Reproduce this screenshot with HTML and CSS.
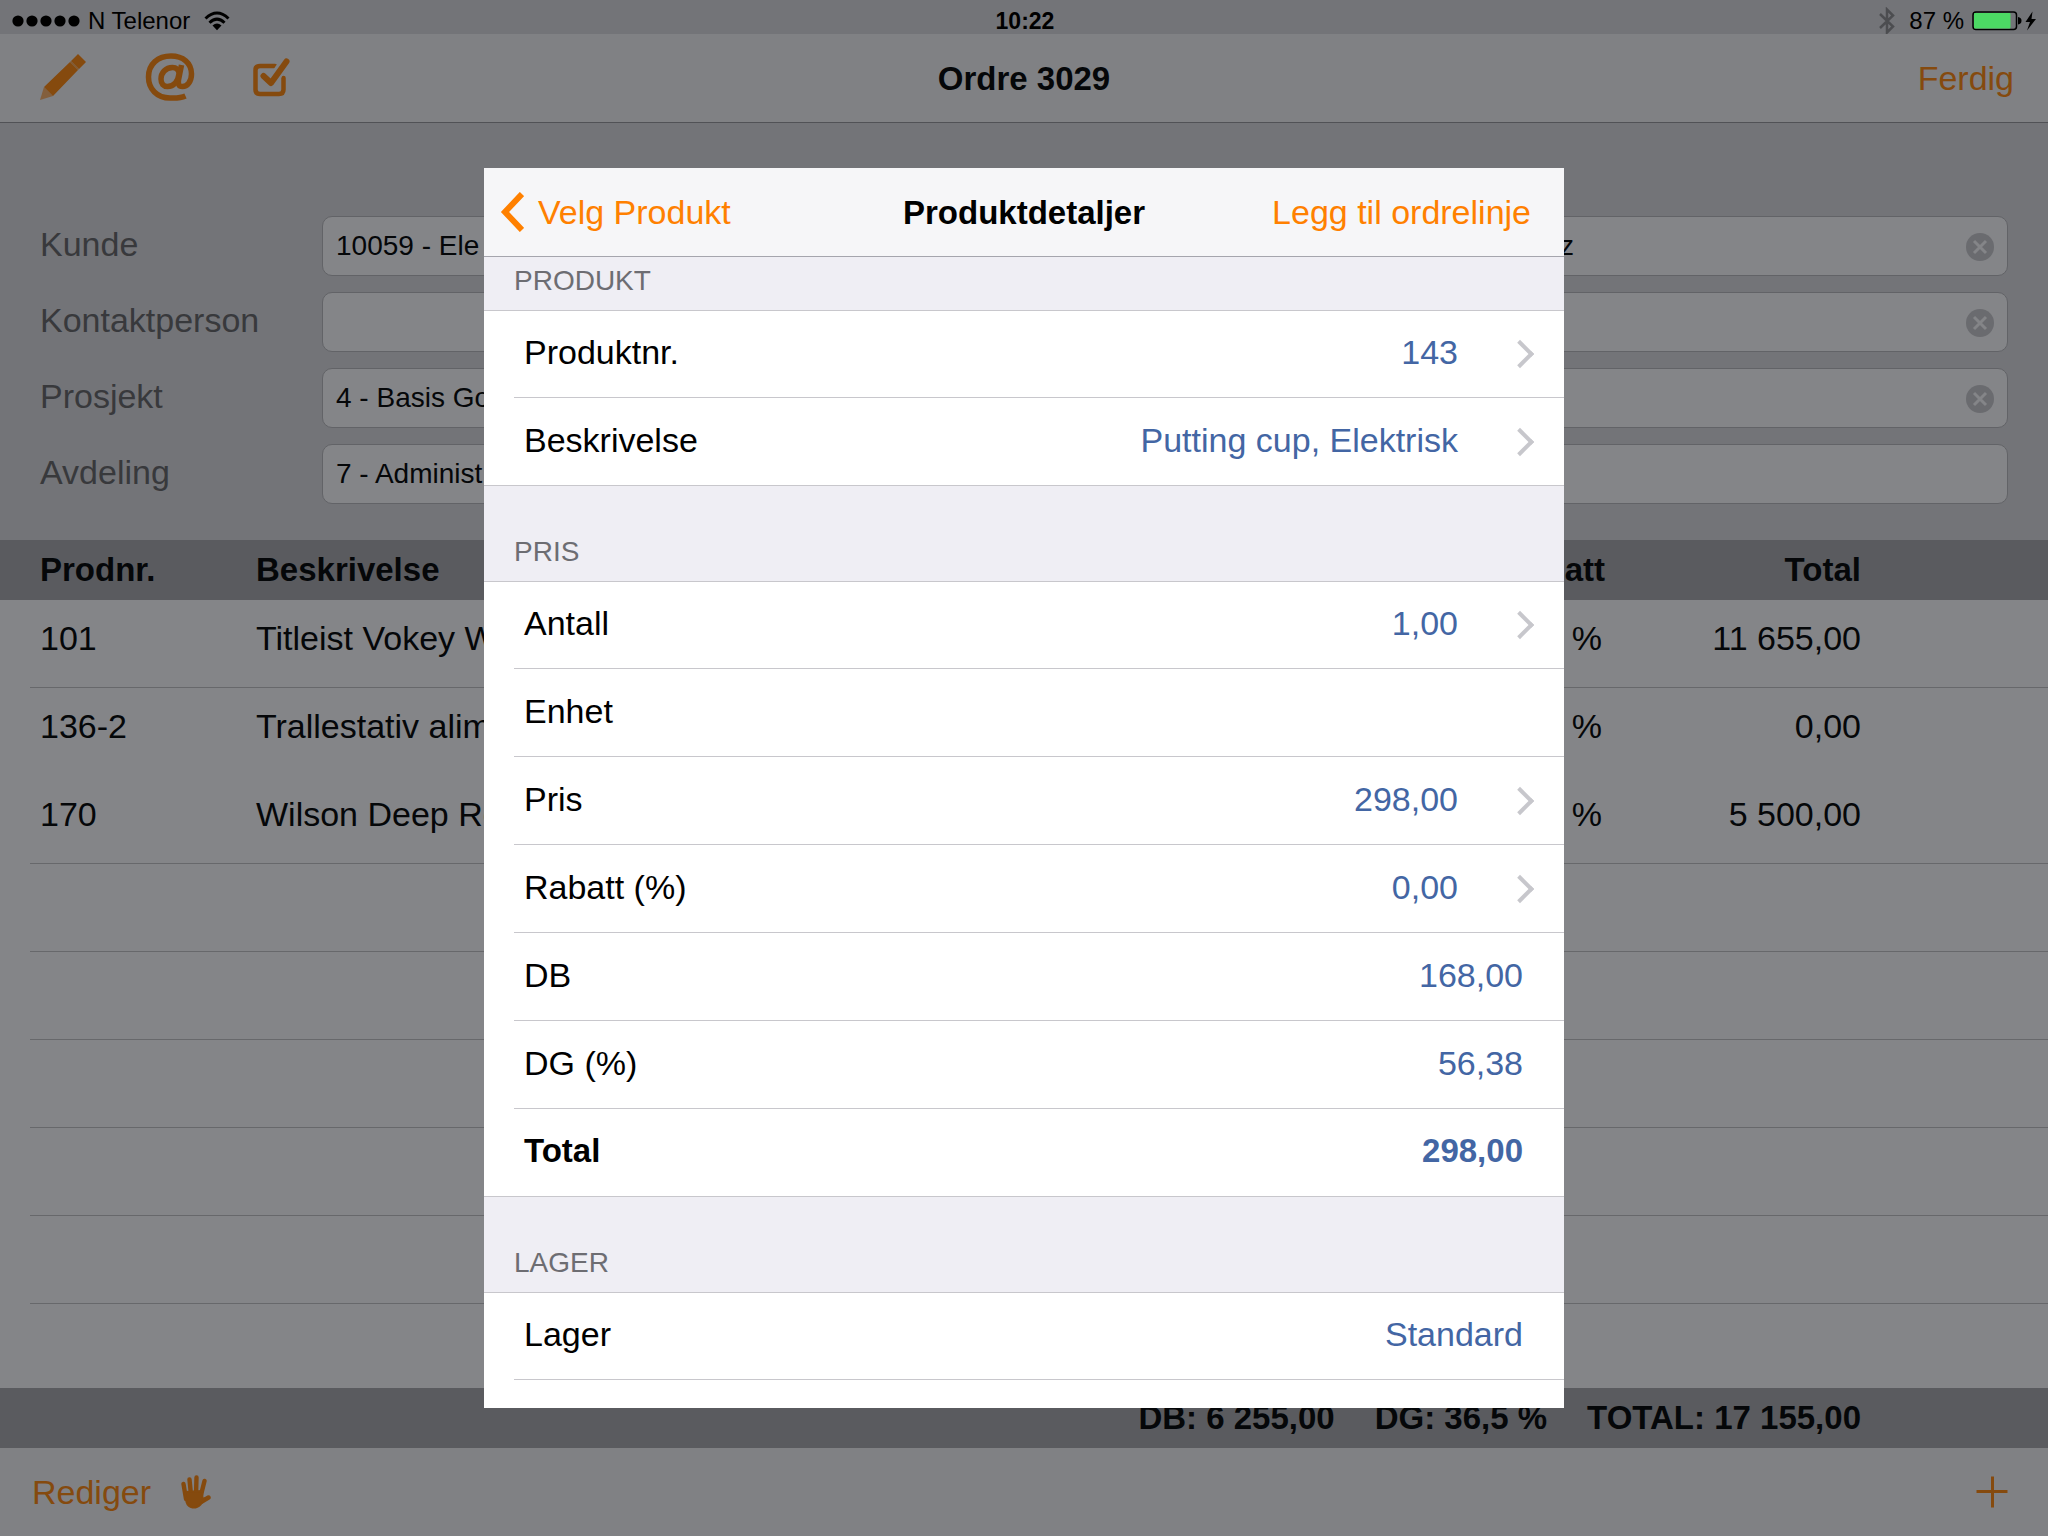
FILE: index.html
```html
<!DOCTYPE html>
<html lang="no">
<head>
<meta charset="utf-8">
<title>Ordre 3029</title>
<meta name="viewport" content="width=device-width, initial-scale=1">
<link rel="stylesheet" href="styles.css">
</head>
<body>
<div class="screen">
  <div class="status">
    <div class="status-side">
      <svg class="dots" width="68" height="12" viewBox="0 0 68 12"><circle cx="6" cy="6" r="5.6"/><circle cx="20" cy="6" r="5.6"/><circle cx="34" cy="6" r="5.6"/><circle cx="48" cy="6" r="5.6"/><circle cx="62" cy="6" r="5.6"/></svg>
      <span>N Telenor</span>
      <svg class="wifi" width="26" height="20" viewBox="0 0 26 20"><g fill="none" stroke="#000" stroke-width="3"><path d="M1.5 7.5Q13 -3.5 24.500 7.500"/><path d="M5.500 11.800Q13 4.500 20.500 11.800"/></g><path d="M8.500 14.500Q13 10.500 17.500 14.500L13 19.200z"/></svg>
    </div>
    <time class="clock">10:22</time>
    <div class="status-side status-right">
      <svg width="16" height="28" viewBox="0 0 16 28" fill="none" stroke="#4c4d50" stroke-width="2.500"><path d="M1 7L14 19.500L8 25.500V2.500L14 8.500L1 21"/></svg>
      <span>87 %</span>
      <svg width="66" height="20" viewBox="0 0 66 20"><rect x="1" y="1" width="43.500" height="17.500" rx="3" fill="none" stroke="#000" stroke-width="1.500"/><rect x="2" y="2" width="36.500" height="15.500" rx="1" fill="#4cd964"/><path d="M46 6Q49.500 6.500 49.500 9.800T46 13.500z"/><path d="M60.500 0.500L53.500 11H58L55 19.500L64 8H59.500z"/></svg>
    </div>
  </div>

  <header class="bar">
    <div class="tools">
      <button class="icon" aria-label="Rediger ordre"><svg width="48" height="48" viewBox="0 0 48 48" fill="currentColor"><path d="M39 0L47 8L40 15L32 7zM31 8L39 16L14 42L5 33z"/><path d="M31 8L32 7L40 15L39 16z" opacity=".7"/><path d="M5 33L14 42L1 46z" opacity=".6"/></svg></button>
      <button class="icon" aria-label="E-post"><svg width="50" height="50" viewBox="0 0 50 50" fill="none" stroke="currentColor" stroke-width="5.500"><path d="M40.500 43C35 45.500 30 45 25 45C12 45 3.500 36 3.500 24C3.500 11 13 3 26 3C38 3 46.500 10 46.500 21C46.500 29 42 33.500 37.500 33.500C33.500 33.500 33 31 33.500 27L36.500 12"/><path d="M34 21C34 16.500 31 14.500 27.500 14.500C20.500 14.500 16 20 16 26C16 31 18.500 33.500 22.500 33.500C29 33.500 33 28 34 21z"/></svg></button>
      <button class="icon" aria-label="Fullfør"><svg width="38" height="40" viewBox="0 0 38 40" fill="none" stroke="currentColor" stroke-linecap="round" stroke-linejoin="round"><path stroke-width="4.500" d="M22 8H7Q2.500 8 2.500 12V31.500Q2.500 36 7 36H26Q30.500 36 30.500 31.500V20"/><path stroke="#808184" stroke-width="11" stroke-linecap="butt" d="M18 25L32 4"/><path stroke-width="6" d="M10.500 18L18 25L33.500 3.500"/></svg></button>
    </div>
    <h1 class="title">Ordre 3029</h1>
    <button class="text-btn bar-end">Ferdig</button>
  </header>

  <form class="order">
    <div class="field">
      <label for="kunde">Kunde</label>
      <div class="inputs"><input id="kunde" class="box" value="10059 - Ele"><input class="box" aria-label="Kunde, navn" value="z"></div>
      <button type="button" class="clear" aria-label="Tøm kunde"><svg viewBox="0 0 28 28"><circle cx="14" cy="14" r="14"/><path d="M8 8L20 20M20 8L8 20"/></svg></button>
    </div>
    <div class="field">
      <label for="kontakt">Kontaktperson</label>
      <div class="inputs"><input id="kontakt" class="box"><input class="box" aria-label="Kontaktperson, navn"></div>
      <button type="button" class="clear" aria-label="Tøm kontaktperson"><svg viewBox="0 0 28 28"><circle cx="14" cy="14" r="14"/><path d="M8 8L20 20M20 8L8 20"/></svg></button>
    </div>
    <div class="field">
      <label for="prosjekt">Prosjekt</label>
      <div class="inputs"><input id="prosjekt" class="box" value="4 - Basis Golf"><input class="box" aria-label="Prosjekt, navn"></div>
      <button type="button" class="clear" aria-label="Tøm prosjekt"><svg viewBox="0 0 28 28"><circle cx="14" cy="14" r="14"/><path d="M8 8L20 20M20 8L8 20"/></svg></button>
    </div>
    <div class="field">
      <label for="avdeling">Avdeling</label>
      <div class="inputs"><input id="avdeling" class="box" value="7 - Administ"><input class="box" aria-label="Avdeling, navn"></div>
    </div>
  </form>

  <div class="lines">
    <table>
      <thead><tr><th class="c-nr">Prodnr.</th><th class="c-desc">Beskrivelse</th><th class="c-disc">Rabatt</th><th class="c-total">Total</th></tr></thead>
      <tbody>
        <tr><td>101</td><td>Titleist Vokey W</td><td class="num pct">%</td><td class="num c-total">11 655,00</td></tr>
        <tr class="no-rule"><td>136-2</td><td>Trallestativ alim</td><td class="num pct">%</td><td class="num c-total">0,00</td></tr>
        <tr><td>170</td><td>Wilson Deep Red</td><td class="num pct">%</td><td class="num c-total">5 500,00</td></tr>
        <tr><td colspan="4"></td></tr>
        <tr><td colspan="4"></td></tr>
        <tr><td colspan="4"></td></tr>
        <tr><td colspan="4"></td></tr>
        <tr><td colspan="4"></td></tr>
      </tbody>
    </table>
  </div>

  <div class="sums"><span>DB: 6 255,00</span><span>DG: 36,5 %</span><span>TOTAL: 17 155,00</span></div>

  <footer class="toolbar">
    <button class="text-btn">Rediger</button>
    <button class="icon" aria-label="Flytt"><svg width="30" height="34" viewBox="0 0 30 34" fill="none" stroke="currentColor" stroke-linecap="round"><path stroke-width="4.400" d="M2.500 9L5 24M8.500 4.500L10 20M15.500 2.500L15 20M23.500 6L20 20M27.500 22.500L20 27"/><path fill="currentColor" stroke-width="2" stroke-linejoin="round" d="M4.500 17L21 16L21.500 23.500L24 23.500L19.500 29.500Q16 33 11.500 32.500Q7 32 5.500 27z"/></svg></button>
    <button class="icon add" aria-label="Legg til"><svg width="32" height="32" viewBox="0 0 32 32" fill="none" stroke="currentColor" stroke-width="3"><path d="M0.500 15.500H31.500M16.500 0.500V31.500"/></svg></button>
  </footer>
</div>

<div class="overlay">
  <section class="modal" role="dialog" aria-modal="true" aria-labelledby="modal-title">
    <header class="modal-head">
      <button class="text-btn back"><svg width="24" height="40" viewBox="0 0 24 40" fill="none" stroke="currentColor" stroke-width="6"><path d="M22 2L5 20L22 38"/></svg>Velg Produkt</button>
      <h2 id="modal-title" class="title">Produktdetaljer</h2>
      <button class="text-btn modal-add">Legg til ordrelinje</button>
    </header>
    <div class="modal-body">
      <h3 class="group-title group-title-first">PRODUKT</h3>
      <dl class="group">
        <div class="row link"><dt>Produktnr.</dt><dd>143</dd></div>
        <div class="row link"><dt>Beskrivelse</dt><dd>Putting cup, Elektrisk</dd></div>
      </dl>
      <h3 class="group-title">PRIS</h3>
      <dl class="group">
        <div class="row link"><dt>Antall</dt><dd>1,00</dd></div>
        <div class="row"><dt>Enhet</dt><dd></dd></div>
        <div class="row link"><dt>Pris</dt><dd>298,00</dd></div>
        <div class="row link"><dt>Rabatt (%)</dt><dd>0,00</dd></div>
        <div class="row"><dt>DB</dt><dd>168,00</dd></div>
        <div class="row"><dt>DG (%)</dt><dd>56,38</dd></div>
        <div class="row strong"><dt>Total</dt><dd>298,00</dd></div>
      </dl>
      <h3 class="group-title">LAGER</h3>
      <dl class="group">
        <div class="row"><dt>Lager</dt><dd>Standard</dd></div>
        <div class="row"></div>
      </dl>
    </div>
  </section>
</div>
</body>
</html>
```

FILE: styles.css
```css
* { box-sizing: border-box; }

html, body { height: 100%; }

body {
  margin: 0;
  font-family: "Liberation Sans", Arial, Helvetica, sans-serif;
  font-size: 34px;
  line-height: 40px;
  color: #050709;
  background: #848588;
  overflow: hidden;
}

h1, h2, h3, dl, dd { margin: 0; }

button {
  padding: 0;
  border: 0;
  background: none;
  font: inherit;
  color: #854a0e;
}

svg { display: block; }

.screen {
  min-height: 100vh;
  display: flex;
  flex-direction: column;
}

/* Status bar */
.status {
  display: grid;
  grid-template-columns: 1fr auto 1fr;
  align-items: center;
  height: 34px;
  padding: 7px 10px 0 12px;
  font-size: 24px;
  line-height: 28px;
  color: #000;
  background: #737478;
}

.status-side { display: flex; align-items: center; gap: 8px; }
.wifi { margin-left: 6px; }
.status-right { justify-content: flex-end; }
.status-right span { margin-left: 6px; }
.clock { font-size: 23px; font-weight: bold; }

/* Navigation bar */
.bar {
  display: grid;
  grid-template-columns: 1fr auto 1fr;
  align-items: center;
  height: 89px;
  background: #808184;
  border-bottom: 1px solid #515256;
}

.tools { display: flex; align-items: center; gap: 58px; padding-left: 39px; }
.title { padding-top: 2px; font-size: 33px; font-weight: bold; }
.bar-end { justify-self: end; padding-right: 34px; }

/* Order form */
.order {
  display: flex;
  flex-direction: column;
  gap: 16px;
  padding: 93px 40px 36px;
  background: #737478;
}

.field {
  position: relative;
  display: grid;
  grid-template-columns: 282px 1fr;
  align-items: center;
}

.field label { padding-bottom: 4px; color: #38393c; }

.inputs { display: grid; grid-template-columns: 1190fr 468fr; gap: 28px; }

.box {
  width: 100%;
  height: 60px;
  padding: 0 13px;
  border: 1px solid #626367;
  border-radius: 10px;
  background: #848588;
  font: inherit;
  font-size: 28px;
  color: #050709;
}

.box + .box { padding: 0 60px 0 19px; }

.clear { position: absolute; right: 14px; top: 17px; width: 28px; height: 28px; }
.clear circle { fill: #6a6b6f; }
.clear path { stroke: #848588; stroke-width: 3; }

/* Order lines */
.lines { flex: 1; }

table {
  width: 100%;
  border-collapse: separate;
  border-spacing: 0;
  table-layout: fixed;
}

th {
  height: 60px;
  padding: 0;
  font-size: 33px;
  text-align: left;
  background: #5a5b5f;
}

td { height: 88px; padding: 0 0 12px; }

th:first-child, td:first-child { padding-left: 40px; }
.c-nr { width: 256px; }
.c-disc { width: 260px; text-align: right; }
th.c-total { width: 443px; text-align: right; }
.c-total { padding-right: 187px; }
.num { text-align: right; }
.pct { padding-right: 3px; }

tbody tr {
  background: linear-gradient(#67686b, #67686b) 30px 100% / 100% 1px no-repeat;
}
tbody .no-rule { background: none; }

.sums {
  display: flex;
  justify-content: flex-end;
  align-items: center;
  gap: 40px;
  height: 60px;
  padding-right: 187px;
  font-size: 33px;
  font-weight: bold;
  background: #5a5b5f;
}

.toolbar {
  display: flex;
  align-items: center;
  gap: 30px;
  height: 88px;
  padding: 0 40px 0 32px;
  background: #808184;
}

.add { margin-left: auto; }

/* Product details dialog */
.overlay {
  position: fixed;
  inset: 0;
  display: flex;
  justify-content: center;
  align-items: flex-start;
  padding: 168px 24px 128px;
}

.modal {
  display: flex;
  flex-direction: column;
  width: 100%;
  max-width: 1080px;
  height: 100%;
  background: #fff;
  color: #000;
}

.modal button { color: #ff8000; }

.modal-head {
  flex: none;
  display: grid;
  grid-template-columns: 1fr auto 1fr;
  align-items: center;
  height: 89px;
  background: #f6f6f8;
  border-bottom: 1px solid #a5a5ad;
}

.modal .back { display: flex; align-items: center; gap: 14px; padding-left: 16px; }
.modal .modal-add { justify-self: end; padding-right: 33px; }

.modal-body { flex: 1; min-height: 0; overflow: hidden; background: #efeef4; }

.group-title {
  height: 95px;
  padding: 50px 30px 0;
  font-size: 28px;
  line-height: 32px;
  font-weight: normal;
  color: #6d6d72;
}

.group-title-first { height: 53px; padding-top: 8px; }

.group {
  border-bottom: 1px solid #c8c7cc;
  background: #fff;
}

.row {
  display: flex;
  justify-content: space-between;
  align-items: center;
  height: 88px;
  padding: 0 41px 4px 40px;
}

.row:first-child { border-top: 1px solid #c8c7cc; padding-bottom: 6px; }
.row:last-child { height: 87px; }
.row:not(:last-child) {
  background: linear-gradient(#c8c7cc, #c8c7cc) 30px 100% / 100% 1px no-repeat;
}

.row dd { color: #4366a4; }
.strong { font-size: 33px; font-weight: bold; }

.row.link { padding-right: 34px; }
.link dd { display: flex; align-items: center; gap: 52px; }
.link dd::after {
  content: "";
  width: 16px;
  height: 16px;
  margin-top: 4px;
  border: solid #c7c7cc;
  border-width: 4px 4px 0 0;
  transform: rotate(45deg);
}
```
